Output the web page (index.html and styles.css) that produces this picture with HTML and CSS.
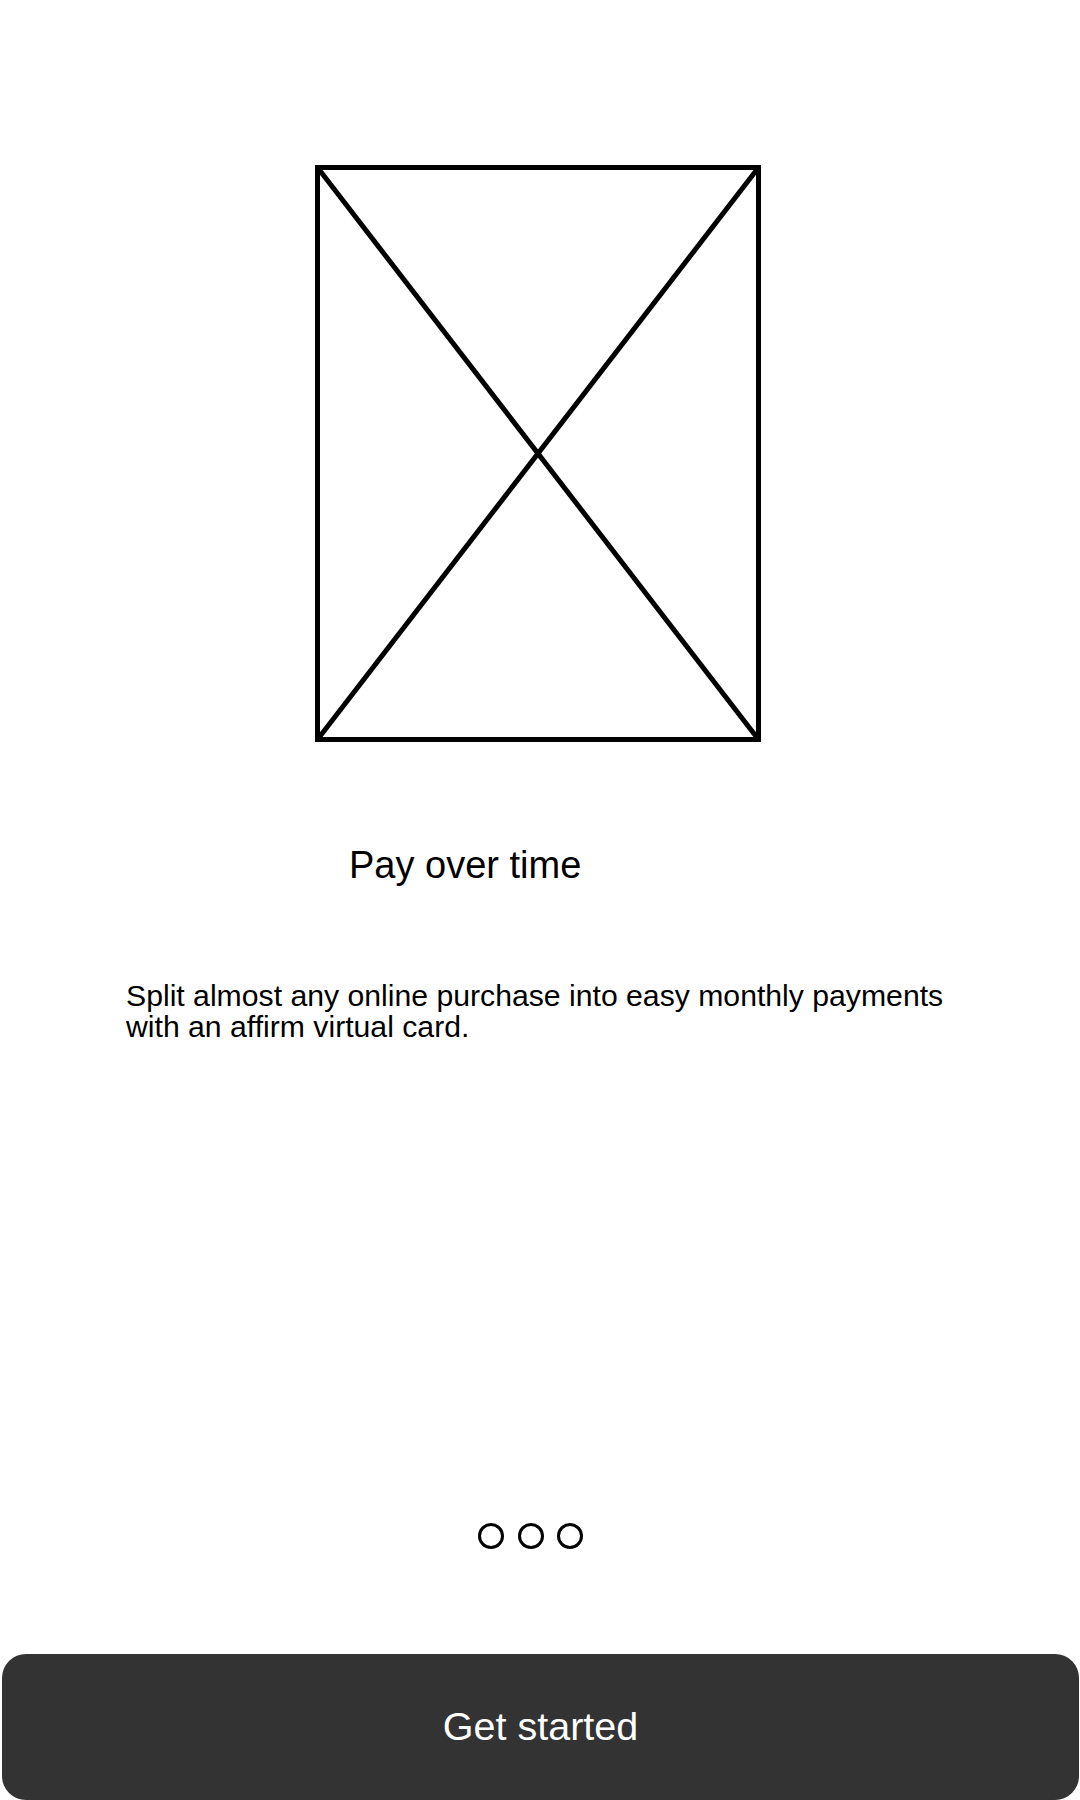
FILE: index.html
```html
<!DOCTYPE html>
<html lang="en">
<head>
<meta charset="utf-8">
<title>Pay over time</title>
<link rel="stylesheet" href="styles.css">
</head>
<body>
<main class="screen">
  <div class="hero">
    <svg class="placeholder" width="446" height="577" viewBox="0 0 446 577" aria-hidden="true">
      <rect x="2.5" y="2.5" width="441" height="572" fill="none" stroke="#000" stroke-width="5"/>
      <line x1="2.5" y1="2.5" x2="443.5" y2="574.5" stroke="#000" stroke-width="5"/>
      <line x1="443.5" y1="2.5" x2="2.5" y2="574.5" stroke="#000" stroke-width="5"/>
    </svg>
  </div>
  <h1 class="title">Pay over time</h1>
  <p class="desc">Split almost any online purchase into easy monthly payments<br>with an affirm virtual card.</p>
  <div class="dots">
    <span class="dot"></span>
    <span class="dot"></span>
    <span class="dot"></span>
  </div>
  <button class="cta" type="button">Get started</button>
</main>
</body>
</html>
```
FILE: styles.css
```css
html, body {
  margin: 0;
  padding: 0;
  background: #fff;
}

body {
  font-family: "Liberation Sans", Arial, sans-serif;
  color: #000;
  width: 1080px;
  height: 1800px;
  overflow: hidden;
}

.screen {
  display: flex;
  flex-direction: column;
  width: 1080px;
}

.hero {
  padding-top: 165px;
  padding-left: 315px;
  height: 577px;
}

.placeholder {
  display: block;
}

.title {
  margin: 105px 0 0 0;
  padding-left: 349px;
  font-size: 38px;
  line-height: 37.5px;
  font-weight: normal;
}

.desc {
  margin: 95px 0 0 0;
  padding-left: 126px;
  font-size: 30.2px;
  line-height: 31px;
}

.dots {
  margin-top: 481px;
  padding-left: 478px;
  display: flex;
  gap: 13.5px;
}

.dot {
  display: block;
  width: 20px;
  height: 20px;
  border: 3px solid #000;
  border-radius: 50%;
}

.cta {
  margin: 105px 0 0 2px;
  width: 1077px;
  height: 146px;
  border: none;
  border-radius: 24px;
  background: #333333;
  color: #fff;
  font-family: "Liberation Sans", Arial, sans-serif;
  font-size: 39.5px;
  padding: 0;
  cursor: pointer;
}
```
